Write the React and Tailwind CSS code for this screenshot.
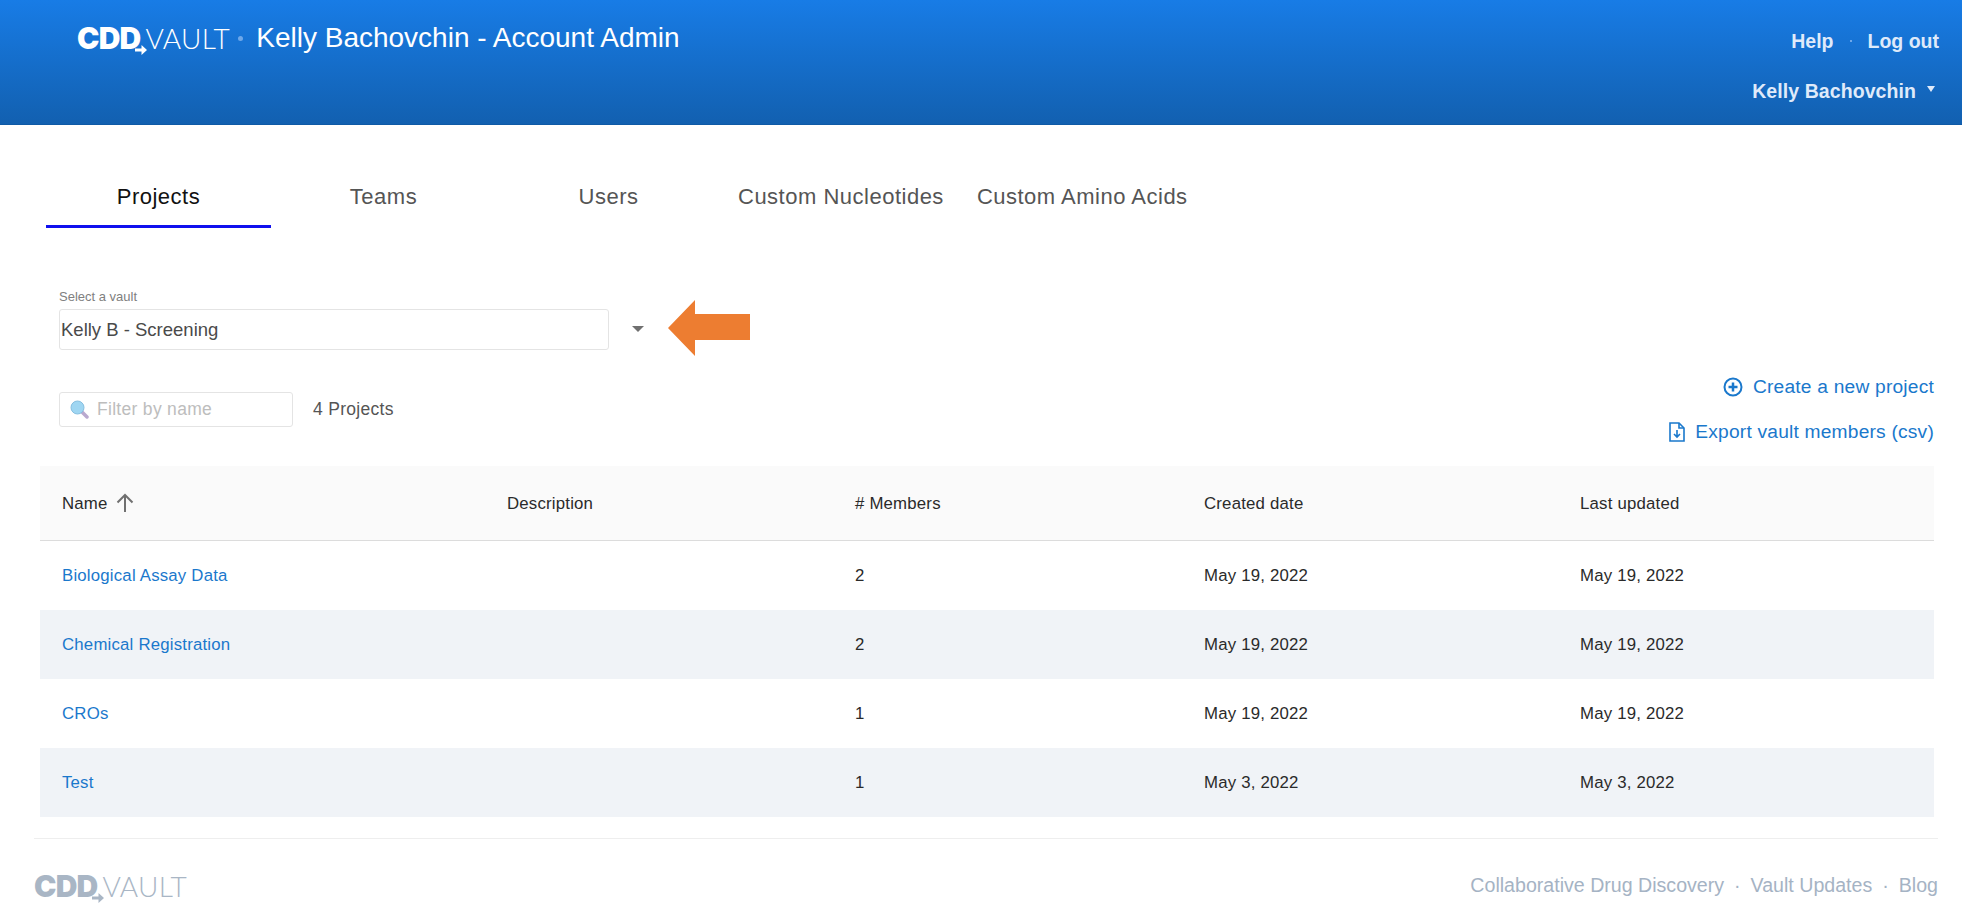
function Logo({ footer }) {
  const c = footer ? "text-[#a9b6c5]" : "text-white";
  return (
    <div className={`flex items-center ${c}`}>
      <span className="relative flex items-center">
        <span className="font-['Inter'] font-black text-[30px] leading-none tracking-[-0.8px]">CDD</span>
        <svg width="12" height="10" viewBox="0 0 12 10" className="absolute right-[-7px] bottom-[-2px]" fill="currentColor"><path d="M0 3.5h6.5V0L12 5 6.5 10V6.5H0z" /></svg>
      </span>
      <span className="ml-[5px] font-['Lato'] font-light text-[28px] leading-none tracking-[0.4px]">VAULT</span>
    </div>
  );
}

const tabs = ["Projects", "Teams", "Users"];
const rows = [
  ["Biological Assay Data", "2", "May 19, 2022", "May 19, 2022"],
  ["Chemical Registration", "2", "May 19, 2022", "May 19, 2022"],
  ["CROs", "1", "May 19, 2022", "May 19, 2022"],
  ["Test", "1", "May 3, 2022", "May 3, 2022"],
];

export default function App() {
  return (
    <div className="w-[1962px] min-h-[924px] bg-white font-['Liberation_Sans',Arial,sans-serif] overflow-hidden">
      <header className="h-[125px] bg-gradient-to-b from-[#187ce6] to-[#1260b0] border-b border-[#0f5aa6] flex justify-between text-white">
        <div className="flex items-center h-[76px] pl-[77px]">
          <Logo />
          <span className="ml-[8px] mr-[13px] w-[5px] h-[5px] rounded-full bg-[#6ea8ea]" />
          <span className="text-[28px] leading-none">Kelly Bachovchin - Account Admin</span>
        </div>
        <div className="flex flex-col items-end pr-[23px] pt-[29px] text-[#dfeafa] font-bold text-[19.5px] leading-[24px]">
          <div className="flex items-center">
            <span>Help</span>
            <span className="mx-[16px] w-[2px] h-[2px] bg-[#6ea8ea]" />
            <span>Log out</span>
          </div>
          <div className="flex items-center mt-[26px] mr-[4px] tracking-[0.08px]">
            <span>Kelly Bachovchin</span>
            <span className="ml-[11px] mb-[5px] w-0 h-0 border-x-[4px] border-x-transparent border-t-[6px] border-t-[#dfeafa]" />
          </div>
        </div>
      </header>

      <nav className="flex mt-[45px] ml-[46px] text-[22px] tracking-[0.5px] text-[#555]">
        {tabs.map((t, i) => (
          <div key={t} className={i === 0 ? "w-[225px] h-[58px] flex items-center justify-center pb-[2px] border-b-[3px] border-[#1010ee] text-[#111]" : "w-[225px] h-[58px] flex items-center justify-center pb-[5px]"}>{t}</div>
        ))}
        <div className="h-[58px] flex items-center pb-[5px] pl-[17px]">Custom Nucleotides</div>
        <div className="h-[58px] flex items-center pb-[5px] pl-[33px]">Custom Amino Acids</div>
      </nav>

      <div className="ml-[59px] mt-[61px]">
        <div className="text-[13px] leading-[16px] text-[#808080]">Select a vault</div>
        <div className="flex items-center">
          <div className="mt-[-2px] w-[550px] h-[41px] border border-[#e4e4e4] rounded-[3px] flex items-center pl-[1px] text-[18.5px] text-[#4a4a4a]">Kelly B - Screening</div>
          <span className="ml-[23px] mt-[-3px] w-0 h-0 border-x-[6px] border-x-transparent border-t-[6px] border-t-[#707070]" />
          <svg width="82" height="56" viewBox="0 0 82 56" className="ml-[24px] mt-[-5px]"><path d="M0 28 27 0V14H82V40H27V56Z" fill="#ed7d31" /></svg>
        </div>
      </div>

      <div className="flex justify-between items-start mt-[17px] pl-[59px] pr-[28px]">
        <div className="flex items-center mt-[19px]">
          <div className="w-[234px] h-[35px] border border-[#e4e4e4] rounded-[3px] flex items-center pl-[10px] text-[17.5px] tracking-[0.3px] text-[#bdbdbd]">
            <svg width="19" height="19" viewBox="0 0 19 19" className="mr-[8px]"><path d="M11 11 17 17" stroke="#b9a9cf" strokeWidth="3.5" strokeLinecap="round" /><circle cx="7.5" cy="7.5" r="6.5" fill="#9fd6f2" stroke="#86bfe0" /></svg>
            Filter by name
          </div>
          <span className="ml-[20px] text-[17.5px] tracking-[0.3px] text-[#555]">4 Projects</span>
        </div>
        <div className="flex flex-col items-end text-[19.2px] tracking-[0.2px] text-[#1a78cc] leading-[24px] mt-[2px]">
          <div className="flex items-center">
            <svg width="20" height="20" viewBox="0 0 20 20" fill="none" stroke="currentColor" strokeWidth="2" className="mr-[10px]"><circle cx="10" cy="10" r="8.5" /><path d="M10 5.5v9M5.5 10h9" strokeWidth="2.5" /></svg>
            Create a new project
          </div>
          <div className="flex items-center mt-[21px]">
            <svg width="18" height="20" viewBox="0 0 18 20" fill="none" stroke="currentColor" strokeWidth="1.6" className="mr-[9px]"><path d="M2 1h9l5 5v13H2z" /><path d="M11 1v5h5" /><path d="M9 8v7M6 12l3 3 3-3" /></svg>
            Export vault members (csv)
          </div>
        </div>
      </div>

      <div className="mr-[28px] mt-[22px] ml-[40px] text-[16.8px] tracking-[0.2px] text-[#2a2a2a]">
        <div className="grid grid-cols-[445px_340px_357px_376px_1fr] items-center h-[75px] pt-[1px] bg-[#fafafa] border-b border-[#dcdcdc]">
          <div className="pl-[22px] flex items-center">
            Name
            <svg width="20" height="20" viewBox="0 0 20 20" fill="none" stroke="#707070" strokeWidth="2" className="ml-[7px] mb-[1px]"><path d="M10 19V2M2.5 9.5 10 2l7.5 7.5" /></svg>
          </div>
          <div className="pl-[22px]">Description</div>
          <div className="pl-[30px]"># Members</div>
          <div className="pl-[22px]">Created date</div>
          <div className="pl-[22px]">Last updated</div>
        </div>
        {rows.map((r, i) => (
          <div key={r[0]} className={i % 2 ? "grid grid-cols-[445px_340px_357px_376px_1fr] items-center h-[69px] pt-[1px] bg-[#f0f3f7]" : "grid grid-cols-[445px_340px_357px_376px_1fr] items-center h-[69px] pt-[1px]"}>
            <div className="pl-[22px] text-[#1a78cc]">{r[0]}</div>
            <div />
            <div className="pl-[30px]">{r[1]}</div>
            <div className="pl-[22px]">{r[2]}</div>
            <div className="pl-[22px]">{r[3]}</div>
          </div>
        ))}
      </div>

      <footer className="mt-[21px] mr-[24px] ml-[34px] border-t border-[#eeeeee] flex justify-between items-center h-[86px] pt-[9px] text-[19.6px] text-[#a5b3c4]">
        <Logo footer />
        <div className="flex items-center">
          <span>Collaborative Drug Discovery</span>
          <span className="mx-[10px]">·</span>
          <span>Vault Updates</span>
          <span className="mx-[10px]">·</span>
          <span>Blog</span>
        </div>
      </footer>
    </div>
  );
}
